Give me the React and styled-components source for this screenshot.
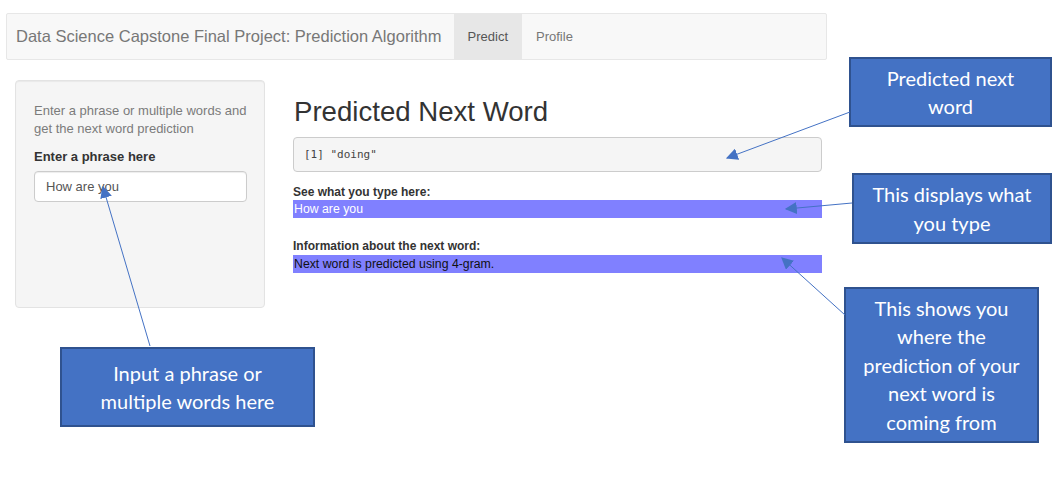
import React from "react";
import styled, { createGlobalStyle } from "styled-components";

const Global = createGlobalStyle`
  html, body { margin: 0; padding: 0; background: #fff; }
  body { font-family: "Liberation Sans", Arial, sans-serif; color: #333; }
  * { box-sizing: border-box; }
`;

const Page = styled.div`
  position: relative;
  width: 1062px;
  height: 486px;
  padding: 13px 0 0 6px;
  overflow: hidden;
`;

const Navbar = styled.nav`
  width: 821px;
  height: 47px;
  background: #f8f8f8;
  border: 1px solid #e7e7e7;
  border-radius: 2px;
  display: flex;
  align-items: stretch;
`;

const Brand = styled.div`
  font-size: 16.5px;
  color: #777;
  display: flex;
  align-items: center;
  padding: 0 12px 0 9px;
`;

const NavLink = styled.div`
  font-size: 13px;
  display: flex;
  align-items: center;
  padding: 0 14px;
  background: ${(p) => (p.$active ? "#e7e7e7" : "transparent")};
  color: ${(p) => (p.$active ? "#555" : "#777")};
`;

const Row = styled.div`
  display: flex;
  align-items: flex-start;
  margin-top: 20px;
`;

const Well = styled.div`
  margin-left: 9px;
  width: 250px;
  height: 228px;
  background: #f5f5f5;
  border: 1px solid #e3e3e3;
  border-radius: 4px;
  padding: 21px 17px 21px 18px;
  box-shadow: inset 0 1px 1px rgba(0, 0, 0, 0.05);
`;

const HelpText = styled.p`
  margin: 0;
  font-size: 13px;
  line-height: 18px;
  color: #7b7b7b;
`;

const Label = styled.div`
  font-size: ${(p) => p.$size || 13}px;
  font-weight: bold;
  color: #333;
  margin-top: ${(p) => p.$top || 0}px;
  line-height: ${(p) => p.$lh || 18}px;
`;

const Input = styled.div`
  margin-top: 5px;
  width: 213px;
  height: 31px;
  border: 1px solid #ccc;
  border-radius: 4px;
  background: #fff;
  font-size: 13px;
  color: #555;
  padding: 0 11px;
  display: flex;
  align-items: center;
  box-shadow: inset 0 1px 1px rgba(0, 0, 0, 0.075);
`;

const Main = styled.div`
  margin-left: 28px;
  width: 529px;
`;

const Heading = styled.h2`
  margin: 16px 0 0 1px;
  font-size: 27.6px;
  font-weight: normal;
  line-height: 32px;
  color: #333;
`;

const Pre = styled.pre`
  margin: 9px 0 0 0;
  height: 35px;
  background: #f5f5f5;
  border: 1px solid #ccc;
  border-radius: 4px;
  padding: 0 10px;
  display: flex;
  align-items: center;
  font-family: "DejaVu Sans Mono", "Liberation Mono", monospace;
  font-size: 11px;
  color: #444;
`;

const Bar = styled.div`
  background: #8080ff;
  height: 18px;
  font-size: 12.3px;
  line-height: 18px;
  padding-left: 1px;
  color: ${(p) => (p.$light ? "#fff" : "#111")};
`;

const Callout = styled.div`
  position: absolute;
  left: ${(p) => p.$x}px;
  top: ${(p) => p.$y}px;
  width: ${(p) => p.$w}px;
  height: ${(p) => p.$h}px;
  background: #4472c4;
  border: 2px solid #2f528f;
  color: #fff;
  font-family: Lato, "Open Sans", sans-serif;
  font-size: 20px;
  line-height: 28.5px;
  text-align: center;
  display: flex;
  flex-direction: column;
  align-items: center;
  justify-content: center;
`;

const Line = styled.span`
  display: block;
  white-space: nowrap;
`;

const Arrows = styled.svg`
  position: absolute;
  left: 0;
  top: 0;
  pointer-events: none;
`;

const arrows = [
  [850, 112, 727, 158],
  [852, 203, 786, 209],
  [845, 315, 782, 258],
  [150, 346, 103, 187],
];

const callouts = [
  { x: 849, y: 57, w: 203, h: 70, lines: ["Predicted next", "word"] },
  { x: 852, y: 173, w: 200, h: 71, lines: ["This displays what", "you type"] },
  {
    x: 844, y: 287, w: 195, h: 156,
    lines: ["This shows you", "where the", "prediction of your", "next word is", "coming from"],
  },
  { x: 60, y: 347, w: 255, h: 80, lines: ["Input a phrase or", "multiple words here"] },
];

export default function App() {
  return (
    <>
      <Global />
      <Page>
        <Navbar>
          <Brand>Data Science Capstone Final Project: Prediction Algorithm</Brand>
          <NavLink $active>Predict</NavLink>
          <NavLink>Profile</NavLink>
        </Navbar>
        <Row>
          <Well>
            <HelpText>
              Enter a phrase or multiple words and get the next word prediction
            </HelpText>
            <Label $top={10}>Enter a phrase here</Label>
            <Input>How are you</Input>
          </Well>
          <Main>
            <Heading>Predicted Next Word</Heading>
            <Pre>[1] "doing"</Pre>
            <Label $size={12} $top={12} $lh={16}>See what you type here:</Label>
            <Bar $light>How are you</Bar>
            <Label $size={12} $top={20} $lh={17}>Information about the next word:</Label>
            <Bar>Next word is predicted using 4-gram.</Bar>
          </Main>
        </Row>

        {callouts.map((c, i) => (
          <Callout key={i} $x={c.x} $y={c.y} $w={c.w} $h={c.h}>
            {c.lines.map((l) => (
              <Line key={l}>{l}</Line>
            ))}
          </Callout>
        ))}

        <Arrows width="1062" height="486" viewBox="0 0 1062 486">
          <defs>
            <marker id="head" viewBox="0 0 10 10" refX="9" refY="5" markerWidth="12" markerHeight="12" markerUnits="userSpaceOnUse" orient="auto">
              <path d="M0,0 L10,5 L0,10 Z" fill="#4472c4" />
            </marker>
          </defs>
          {arrows.map(([x1, y1, x2, y2], i) => (
            <line key={i} x1={x1} y1={y1} x2={x2} y2={y2} stroke="#4472c4" strokeWidth="1" markerEnd="url(#head)" />
          ))}
        </Arrows>
      </Page>
    </>
  );
}
